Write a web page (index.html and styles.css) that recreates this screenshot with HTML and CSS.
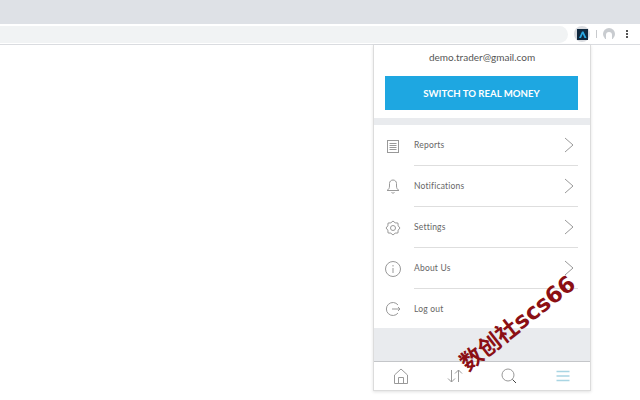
FILE: index.html
```html
<!DOCTYPE html>
<html>
<head>
  <title>Demo trader menu</title>
  <link rel="stylesheet" href="styles.css">
</head>
<body>

<div class="tab-strip"></div>

<div class="toolbar">
  <div class="url-bar"></div>
  <div class="ext-button">
    <svg width="11" height="11" viewBox="0 0 11 11">
      <rect width="11" height="11" fill="#10293f"/>
      <path d="M2 9 L5 2.5 H6.5 L9.5 9 H7.5 L5.7 5 L4 9 Z" fill="#2aa7e0"/>
    </svg>
  </div>
  <div class="toolbar-sep"></div>
  <div class="avatar"><div class="avatar-inner"></div></div>
  <div class="kebab"><span></span><span></span><span></span></div>
</div>

<div class="page">
  <div class="popup">
    <div class="email">demo.trader@gmail.com</div>
    <div class="switch-wrap">
      <button class="switch-btn">SWITCH TO REAL MONEY</button>
    </div>
    <div class="band"></div>

    <div class="menu">
      <div class="menu-row">
        <svg class="menu-icon" width="24" height="24" viewBox="0 0 24 24" fill="none" stroke="#999">
          <rect x="6.5" y="6.5" width="11" height="12"/>
          <path d="M8.5 9.5h7M8.5 11.5h7M8.5 13.5h7M8.5 15.5h7"/>
        </svg>
        <div class="menu-body">
          <span>Reports</span>
          <svg class="chevron" width="10" height="16" viewBox="0 0 10 16" fill="none" stroke="#999"><path d="M1 1l8 7-8 7"/></svg>
        </div>
      </div>
      <div class="menu-row">
        <svg class="menu-icon" width="24" height="24" viewBox="0 0 24 24" fill="none" stroke="#999">
          <path d="M6 15.500c1.500-1 2.500-2 2.500-4.500v-2.500c0-2 1.500-3.500 3.500-3.500s3.500 1.500 3.500 3.500V11c0 2.500 1 3.500 2.500 4.500z"/>
          <path d="M10.500 17.500c.5 .7 2.500 .7 3 0"/>
        </svg>
        <div class="menu-body">
          <span>Notifications</span>
          <svg class="chevron" width="10" height="16" viewBox="0 0 10 16" fill="none" stroke="#999"><path d="M1 1l8 7-8 7"/></svg>
        </div>
      </div>
      <div class="menu-row">
        <svg class="menu-icon" width="24" height="24" viewBox="0 0 24 24" fill="none" stroke="#999">
          <circle cx="12" cy="12" r="2.500"/>
          <path d="M19 12L17.170 14.140 16.950 16.950 14.140 17.170 12 19 9.860 17.170 7.050 16.950 6.830 14.140 5 12 6.830 9.860 7.050 7.050 9.860 6.830 12 5 14.140 6.830 16.950 7.050 17.170 9.860Z"/>
        </svg>
        <div class="menu-body">
          <span>Settings</span>
          <svg class="chevron" width="10" height="16" viewBox="0 0 10 16" fill="none" stroke="#999"><path d="M1 1l8 7-8 7"/></svg>
        </div>
      </div>
      <div class="menu-row">
        <svg class="menu-icon" width="24" height="24" viewBox="0 0 24 24" fill="none" stroke="#999">
          <circle cx="12" cy="12" r="7.500"/>
          <path d="M12 11v5M12 8v1.500"/>
        </svg>
        <div class="menu-body">
          <span>About Us</span>
          <svg class="chevron" width="10" height="16" viewBox="0 0 10 16" fill="none" stroke="#999"><path d="M1 1l8 7-8 7"/></svg>
        </div>
      </div>
      <div class="menu-row menu-row-last">
        <svg class="menu-icon" width="24" height="24" viewBox="0 0 24 24" fill="none" stroke="#999">
          <path d="M17 8a6.500 6.500 0 1 0 0 8"/>
          <path d="M11 12h8M17 10l2 2-2 2"/>
        </svg>
        <div class="menu-body no-line">
          <span>Log out</span>
        </div>
      </div>
    </div>

    <div class="footer-gap"></div>

    <div class="tabs">
      <svg width="18" height="18" viewBox="0 0 18 18" fill="none" stroke="#999">
        <path d="M2.500 8L9 2l6.500 6v8.500h-13z"/>
        <path d="M6.500 16.500v-6h5v6"/>
      </svg>
      <svg width="18" height="18" viewBox="0 0 18 18" fill="none" stroke="#999">
        <path d="M5.500 3v12M2 11.500L5.500 15 9 11.500"/>
        <path d="M12.500 15V3M9 6.500L12.500 3 16 6.500"/>
      </svg>
      <svg width="18" height="18" viewBox="0 0 18 18" fill="none" stroke="#999">
        <circle cx="8" cy="8" r="6"/>
        <path d="M12.500 12.500L16 16" stroke="#444"/>
      </svg>
      <svg width="18" height="18" viewBox="0 0 18 18" fill="none" stroke="#a9d5e3" stroke-width="1.500">
        <path d="M2.500 4.500h13M2.500 9h13M2.500 13.500h13"/>
      </svg>
    </div>
  </div>

  <div class="watermark">数创社scs66</div>
</div>

</body>
</html>
```

FILE: styles.css
```css
html, body { height: 100%; }
body {
  margin: 0;
  font-family: "Lato", "Noto Sans CJK SC", sans-serif;
  background-color: #fff;
  overflow: hidden;
}
.tab-strip {
  height: 24px;
  background-color: #dee1e6;
}
.toolbar {
  height: 20px;
  display: flex;
  align-items: center;
  border-bottom: 1px solid #dadce0;
  background-color: #fff;
}
.url-bar {
  width: 568px;
  height: 17px;
  background-color: #f1f3f4;
  border-radius: 0 9px 9px 0;
}
.ext-button {
  width: 16px;
  height: 16px;
  margin-left: 6px;
  border-radius: 50%;
  background-color: #dadce0;
  display: flex;
  align-items: center;
  justify-content: center;
}
.toolbar-sep {
  width: 1px;
  height: 8px;
  background-color: #c8cacd;
  margin-left: 6px;
}
.avatar {
  width: 12px;
  height: 12px;
  margin-left: 6px;
  border-radius: 50%;
  background-color: #c9ccd0;
  display: flex;
  align-items: center;
  justify-content: center;
}
.avatar-inner {
  width: 6px;
  height: 8px;
  background-color: #fff;
  border-radius: 3px 3px 0 0;
  margin-top: 4px;
}
.kebab {
  margin-left: 11px;
  display: flex;
  flex-direction: column;
  gap: 1px;
}
.kebab span {
  width: 2px;
  height: 2px;
  background-color: #555;
}

.page {
  position: relative;
  display: flex;
  justify-content: flex-end;
  padding-right: 49px;
}
.popup {
  width: 216px;
  height: 345px;
  border: 1px solid #dcdcdc;
  border-top: none;
  background-color: #fff;
  display: flex;
  flex-direction: column;
  box-shadow: 0 1px 3px rgba(0, 0, 0, 0.12);
}
.email {
  height: 31px;
  line-height: 24px;
  text-align: center;
  font-size: 10px;
  color: #555;
}
.switch-wrap { padding: 0 12px 8px 11px; }
.switch-btn {
  display: block;
  width: 100%;
  height: 34px;
  border: none;
  background-color: #1ea7e1;
  color: #fff;
  font-family: inherit;
  font-size: 9.600px;
  font-weight: 700;
}
.band {
  height: 7px;
  background-color: #e9ebee;
}
.menu { display: flex; flex-direction: column; }
.menu-row {
  height: 41px;
  display: flex;
  align-items: center;
}
.menu-row-last { height: 39px; }
.menu-icon {
  flex: none;
  margin: 0 9px 0 7px;
}
.menu-body {
  flex: 1;
  align-self: stretch;
  margin-right: 12px;
  display: flex;
  align-items: center;
  justify-content: space-between;
  border-bottom: 1px solid #dedede;
  box-sizing: border-box;
  font-size: 8.500px;
  color: #666;
  letter-spacing: 0.2px;
}
.menu-body.no-line { border-bottom: none; }
.chevron { margin-right: 4px; }
.footer-gap {
  flex: 1;
  background-color: #e9ebee;
  border-bottom: 1px solid #c4c6c9;
}
.tabs {
  height: 28px;
  display: grid;
  grid-template-columns: repeat(4, 1fr);
  align-items: center;
  justify-items: center;
}
.watermark {
  position: absolute;
  left: 448px;
  top: 262px;
  font-family: "DejaVu Sans", "Noto Sans CJK SC", sans-serif;
  font-size: 22.500px;
  font-weight: 700;
  line-height: 32px;
  color: #8b0f14;
  white-space: nowrap;
  transform: rotate(-38deg);
}
```
